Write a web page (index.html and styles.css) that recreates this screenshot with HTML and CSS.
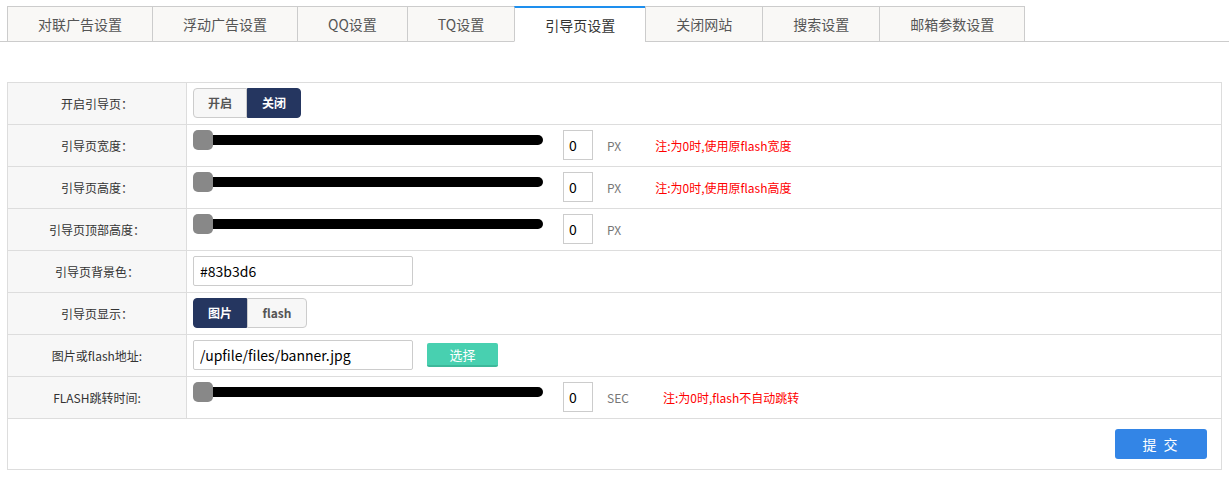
FILE: index.html
```html
<!DOCTYPE html>
<html>
<head>
  <title>引导页设置</title>
  <link rel="stylesheet" href="styles.css">
</head>
<body>
  <ul class="tabs">
    <li>对联广告设置</li>
    <li>浮动广告设置</li>
    <li>QQ设置</li>
    <li>TQ设置</li>
    <li class="active">引导页设置</li>
    <li>关闭网站</li>
    <li>搜索设置</li>
    <li>邮箱参数设置</li>
  </ul>

  <table class="form-table">
    <tr>
      <th>开启引导页：</th>
      <td>
        <div class="switch">
          <span>开启</span><span class="on">关闭</span>
        </div>
      </td>
    </tr>
    <tr>
      <th>引导页宽度：</th>
      <td>
        <div class="slider-row">
          <input class="slider" type="range" min="0" max="1000" value="0">
          <input class="num" type="text" value="0">
          <span class="unit">PX</span>
          <span class="note">注:为0时,使用原flash宽度</span>
        </div>
      </td>
    </tr>
    <tr>
      <th>引导页高度：</th>
      <td>
        <div class="slider-row">
          <input class="slider" type="range" min="0" max="1000" value="0">
          <input class="num" type="text" value="0">
          <span class="unit">PX</span>
          <span class="note">注:为0时,使用原flash高度</span>
        </div>
      </td>
    </tr>
    <tr>
      <th>引导页顶部高度：</th>
      <td>
        <div class="slider-row">
          <input class="slider" type="range" min="0" max="1000" value="0">
          <input class="num" type="text" value="0">
          <span class="unit">PX</span>
        </div>
      </td>
    </tr>
    <tr>
      <th>引导页背景色：</th>
      <td><input class="text" type="text" value="#83b3d6"></td>
    </tr>
    <tr>
      <th>引导页显示：</th>
      <td>
        <div class="switch">
          <span class="on">图片</span><span class="wide">flash</span>
        </div>
      </td>
    </tr>
    <tr>
      <th>图片或flash地址:</th>
      <td>
        <div class="file-row">
          <input class="text" type="text" value="/upfile/files/banner.jpg">
          <button class="btn-pick">选择</button>
        </div>
      </td>
    </tr>
    <tr>
      <th>FLASH跳转时间:</th>
      <td>
        <div class="slider-row">
          <input class="slider" type="range" min="0" max="60" value="0">
          <input class="num" type="text" value="0">
          <span class="unit">SEC</span>
          <span class="note">注:为0时,flash不自动跳转</span>
        </div>
      </td>
    </tr>
    <tr>
      <td colspan="2" class="submit-cell">
        <button class="btn-submit">提 交</button>
      </td>
    </tr>
  </table>
</body>
</html>
```

FILE: styles.css
```css
/* page */
body {
  margin: 0;
  font-family: "Microsoft YaHei", "Noto Sans CJK SC", sans-serif;
  font-size: 12px;
  color: #333;
  background: #fff;
}

/* tabs */
.tabs {
  list-style: none;
  margin: 0;
  padding: 6px 0 0 7px;
  display: flex;
  border-bottom: 1px solid #ccc;
}

.tabs li {
  height: 34px;
  line-height: 34px;
  padding: 0 30px;
  font-size: 14px;
  color: #555;
  background: #f9f8f6;
  border: 1px solid #ccc;
  border-right: none;
  border-bottom: none;
  margin-bottom: -1px;
  border-bottom: 1px solid #ccc;
}

.tabs li:last-child {
  border-right: 1px solid #ccc;
}

.tabs li.active {
  background: #fff;
  color: #333;
  border-top: 2px solid #1e8fee;
  height: 33px;
  line-height: 35px;
  border-bottom-color: #fff;
}

/* form table */
.form-table {
  margin: 40px 0 0 7px;
  width: 1215px;
  border-collapse: collapse;
}

.form-table th,
.form-table td {
  border: 1px solid #ddd;
  padding: 5px 6px 6px;
  height: 30px;
}

.form-table th {
  width: 166px;
  background: #f7f7f7;
  font-weight: normal;
  text-align: center;
}

/* toggle buttons */
.switch {
  display: inline-flex;
}

.switch span {
  width: 52px;
  height: 28px;
  line-height: 28px;
  text-align: center;
  font-weight: bold;
  color: #555;
  background: #f7f7f7;
  border: 1px solid #ccc;
}

.switch span:first-child {
  border-radius: 4px 0 0 4px;
}

.switch span:last-child {
  border-radius: 0 4px 4px 0;
}

.switch span.wide {
  width: 58px;
}

.switch span.on {
  background: #253660;
  border-color: #253660;
  color: #fff;
}

/* slider rows */
.slider-row {
  display: flex;
  align-items: center;
  height: 30px;
}

.slider {
  -webkit-appearance: none;
  appearance: none;
  width: 350px;
  height: 20px;
  margin: 0;
  background: transparent;
  align-self: flex-start;
}

.slider::-webkit-slider-runnable-track {
  height: 10px;
  background: #000;
  border-radius: 5px;
}

.slider::-webkit-slider-thumb {
  -webkit-appearance: none;
  width: 20px;
  height: 20px;
  margin-top: -5px;
  background: #888;
  border-radius: 5px;
}

.num {
  box-sizing: border-box;
  width: 30px;
  height: 30px;
  margin-left: 20px;
  padding: 0 5px;
  border: 1px solid #ccc;
  font-family: inherit;
  font-size: 14px;
  color: #000;
}

.unit {
  margin-left: 14px;
  color: #777;
}

.note {
  margin-left: 34px;
  color: #f00;
}

/* text inputs */
.text {
  box-sizing: border-box;
  width: 220px;
  height: 30px;
  padding: 0 6px;
  border: 1px solid #ccc;
  border-radius: 2px;
  font-family: inherit;
  font-size: 14px;
  color: #000;
  vertical-align: middle;
}

.file-row {
  display: flex;
  align-items: center;
}

.btn-pick {
  width: 71px;
  height: 24px;
  margin-left: 14px;
  border: none;
  border-bottom: 2px solid #3db89a;
  border-radius: 2px;
  background: #48d0b0;
  color: #fff;
  font-family: inherit;
  font-size: 13px;
}

/* submit */
.form-table td.submit-cell {
  text-align: right;
  padding: 10px 14px 10px 6px;
}

.btn-submit {
  width: 92px;
  height: 30px;
  border: none;
  border-radius: 3px;
  background: #3385e6;
  color: #fff;
  font-family: inherit;
  font-size: 14px;
  letter-spacing: 2px;
  cursor: pointer;
}
```
